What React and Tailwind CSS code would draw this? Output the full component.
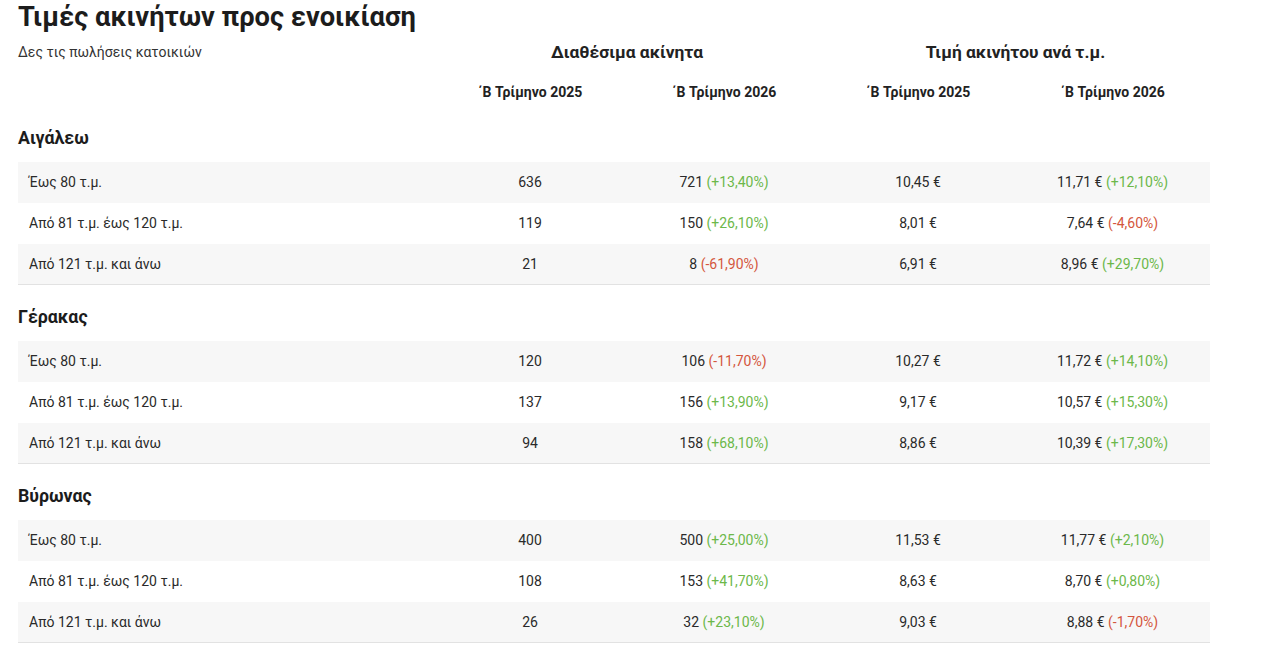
const sections = [
  {
    name: "Αιγάλεω",
    rows: [
      ["Έως 80 τ.μ.", "636", "721", "+13,40%", "10,45 €", "11,71 €", "+12,10%"],
      ["Από 81 τ.μ. έως 120 τ.μ.", "119", "150", "+26,10%", "8,01 €", "7,64 €", "-4,60%"],
      ["Από 121 τ.μ. και άνω", "21", "8", "-61,90%", "6,91 €", "8,96 €", "+29,70%"],
    ],
  },
  {
    name: "Γέρακας",
    rows: [
      ["Έως 80 τ.μ.", "120", "106", "-11,70%", "10,27 €", "11,72 €", "+14,10%"],
      ["Από 81 τ.μ. έως 120 τ.μ.", "137", "156", "+13,90%", "9,17 €", "10,57 €", "+15,30%"],
      ["Από 121 τ.μ. και άνω", "94", "158", "+68,10%", "8,86 €", "10,39 €", "+17,30%"],
    ],
  },
  {
    name: "Βύρωνας",
    rows: [
      ["Έως 80 τ.μ.", "400", "500", "+25,00%", "11,53 €", "11,77 €", "+2,10%"],
      ["Από 81 τ.μ. έως 120 τ.μ.", "108", "153", "+41,70%", "8,63 €", "8,70 €", "+0,80%"],
      ["Από 121 τ.μ. και άνω", "26", "32", "+23,10%", "9,03 €", "8,88 €", "-1,70%"],
    ],
  },
];

function Change({ v }) {
  const neg = v.startsWith("-");
  return (
    <span className={neg ? "text-[#d4563d]" : "text-[#6cb84a]"}>({v})</span>
  );
}

export default function App() {
  return (
    <div
      className="bg-white text-[#222] w-[1262px] h-[655px] overflow-hidden"
      style={{ fontFamily: "Roboto, 'Noto Sans', sans-serif" }}
    >
      <div className="ml-[18px] w-[1192px]">
        <h1 className="h-[35px] leading-[35px] text-[27.3px] font-bold text-[#1c1c1c]">
          Τιμές ακινήτων προς ενοικίαση
        </h1>
        <div className="grid grid-cols-[415px_388px_389px] h-[34px] items-center">
          <div className="text-[14px] text-[#333]">Δες τις πωλήσεις κατοικιών</div>
          <div className="text-center text-[17.4px] font-bold">Διαθέσιμα ακίνητα</div>
          <div className="text-center text-[17.4px] font-bold">Τιμή ακινήτου ανά τ.μ.</div>
        </div>
        <div className="grid grid-cols-[415px_194px_194px_194px_195px] h-[37px] pt-[9px] items-center text-[14px] font-bold">
          <div></div>
          <div className="text-center">΄Β Τρίμηνο 2025</div>
          <div className="text-center">΄Β Τρίμηνο 2026</div>
          <div className="text-center">΄Β Τρίμηνο 2025</div>
          <div className="text-center">΄Β Τρίμηνο 2026</div>
        </div>
        {sections.map((s) => (
          <div key={s.name}>
            <div className="h-[56px] pt-[20px]">
              <div className="leading-[24px] text-[17.8px] font-bold text-[#1c1c1c]">{s.name}</div>
            </div>
            {s.rows.map((r, i) => (
              <div
                key={i}
                className={
                  "grid grid-cols-[415px_194px_194px_194px_195px] h-[41px] items-center text-[14px] text-[#2a2a2a] " +
                  (i % 2 === 0 ? "bg-[#f7f7f7] " : "bg-white ") +
                  (i === 2 ? "border-b border-[#e2e2e2]" : "")
                }
              >
                <div className="pl-[11px]">{r[0]}</div>
                <div className="text-center">{r[1]}</div>
                <div className="text-center">
                  {r[2]} <Change v={r[3]} />
                </div>
                <div className="text-center">{r[4]}</div>
                <div className="text-center">
                  {r[5]} <Change v={r[6]} />
                </div>
              </div>
            ))}
          </div>
        ))}
      </div>
    </div>
  );
}
